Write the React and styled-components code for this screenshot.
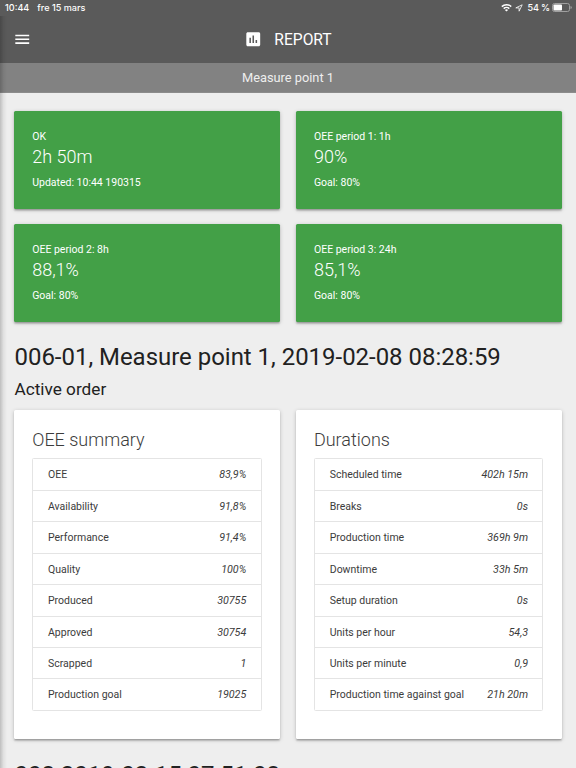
import styled, { createGlobalStyle } from 'styled-components'

const GlobalStyle = createGlobalStyle`
  * {
    box-sizing: border-box;
  }

  body {
    margin: 0;
    background-color: #eeeeee;
    font-family: Roboto, "Liberation Sans", sans-serif;
    color: #212121;
  }
`

const Screen = styled.div`
  position: relative;
  height: 768px;
  overflow: hidden;
`

// shadow that the closed side menu throws on the page
const MenuShadow = styled.div`
  position: absolute;
  top: 16px;
  left: 0;
  bottom: 0;
  width: 7px;
  background: linear-gradient(to right, rgba(0, 0, 0, 0.2), rgba(0, 0, 0, 0.06) 50%, transparent);
`

const Header = styled.header`
  height: 63px;
  background-color: #5a5a5a;
  color: #fff;
`

const StatusBar = styled.div`
  display: flex;
  align-items: center;
  height: 15px;
  padding: 0 4px 0 5px;
  font-family: Inter, "Liberation Sans", sans-serif;
  font-size: 9.1px;
  font-weight: 500;
  line-height: 15px;
`

const StatusDate = styled.span`
  margin-left: 8px;
  flex: 1;
`

const Battery = styled.span`
  margin-left: 4px;
  word-spacing: -0.5px;
`

const StatusIcon = styled.svg`
  display: block;
  flex-shrink: 0;
  margin-left: ${(props) => props.$gap || 0}px;
`

const NavBar = styled.nav`
  display: grid;
  grid-template-columns: 1fr auto 1fr;
  align-items: center;
  height: 49px;
  padding: 0 13px;
`

const Brand = styled.h1`
  display: flex;
  align-items: center;
  gap: 11.5px;
  margin: 0;
  font-size: 15.6px;
  font-weight: 400;
  line-height: 20px;
`

const SubBar = styled.div`
  height: 30px;
  border-bottom: 1px solid #8c8c8c;
  background-color: #828282;
  color: #eeeeee;
  font-size: 12.8px;
  line-height: 29px;
  text-align: center;
`

const Content = styled.main`
  padding: 18px 14.5px 0 14px;
`

const CardGrid = styled.div`
  display: grid;
  grid-template-columns: 1fr 1fr;
  gap: 15.6px 16px;
`

const Card = styled.div`
  padding: 18px 18.2px;
  border-radius: 1.5px;
  background-color: #fff;
  box-shadow: 0 1.5px 1.5px 0 rgba(0, 0, 0, 0.14), 0 2px 1px -1px rgba(0, 0, 0, 0.12), 0 1px 4px 0 rgba(0, 0, 0, 0.2);
`

const StatCard = styled(Card)`
  height: 97.5px;
  background-color: #43a047;
  color: #fff;
  font-size: 10.5px;
  line-height: 16px;
`

const StatValue = styled.div`
  margin-bottom: 6px;
  font-size: 18px;
  font-weight: 300;
  line-height: 24px;
`

const Heading = styled.h2`
  margin: ${(props) => props.$top}px 0 0 0.5px;
  font-size: 23.95px;
  font-weight: 400;
  line-height: 28px;
  white-space: nowrap;
`

const SubHeading = styled.h3`
  margin: 7px 0 10px 0.5px;
  font-size: 17.2px;
  font-weight: 400;
  line-height: 22px;
`

const TableCard = styled(Card)`
  height: 329px;
  color: #3c3c3c;
`

const CardTitle = styled.div`
  margin-bottom: 6px;
  font-size: 18px;
  font-weight: 300;
  line-height: 24px;
`

const List = styled.ul`
  margin: 0;
  padding: 0;
  border: 1px solid #e4e4e4;
  border-radius: 1.5px;
  list-style: none;
`

const Row = styled.li`
  display: flex;
  justify-content: space-between;
  height: 31.4px;
  padding: 0 14.3px 0 14.8px;
  font-size: 10.5px;
  line-height: 31px;

  & + & {
    border-top: 1px solid #e4e4e4;
  }
`

const RowValue = styled.em`
  font-size: 10.7px;
`

const stats = [
  { label: 'OK', value: '2h 50m', note: 'Updated: 10:44 190315' },
  { label: 'OEE period 1: 1h', value: '90%', note: 'Goal: 80%' },
  { label: 'OEE period 2: 8h', value: '88,1%', note: 'Goal: 80%' },
  { label: 'OEE period 3: 24h', value: '85,1%', note: 'Goal: 80%' },
]

const tables = [
  {
    title: 'OEE summary',
    rows: [
      ['OEE', '83,9%'],
      ['Availability', '91,8%'],
      ['Performance', '91,4%'],
      ['Quality', '100%'],
      ['Produced', '30755'],
      ['Approved', '30754'],
      ['Scrapped', '1'],
      ['Production goal', '19025'],
    ],
  },
  {
    title: 'Durations',
    rows: [
      ['Scheduled time', '402h 15m'],
      ['Breaks', '0s'],
      ['Production time', '369h 9m'],
      ['Downtime', '33h 5m'],
      ['Setup duration', '0s'],
      ['Units per hour', '54,3'],
      ['Units per minute', '0,9'],
      ['Production time against goal', '21h 20m'],
    ],
  },
]

const WifiIcon = () => (
  <StatusIcon width="11" height="9" viewBox="0 0 11 9" fill="none" stroke="#fff" strokeWidth="1.5">
    <path d="M0.8 3.6a6.7 6.7 0 0 1 9.4 0" />
    <path d="M2.7 5.6a4 4 0 0 1 5.6 0" />
    <path d="M5.5 8.6L3.9 7a2.3 2.3 0 0 1 3.2 0z" fill="#fff" stroke="none" />
  </StatusIcon>
)

const LocationIcon = () => (
  <StatusIcon $gap={3} width="8" height="8" viewBox="0 0 8 8" fill="none" stroke="#fff" strokeWidth="0.8" strokeLinejoin="round">
    <path d="M7.2 0.8L0.8 3.9h3.3v3.3z" />
  </StatusIcon>
)

const BatteryIcon = () => (
  <StatusIcon $gap={2} width="20" height="9" viewBox="0 0 20 9">
    <rect x="0.5" y="0.5" width="17" height="8" rx="2" fill="none" stroke="#a0a0a0" />
    <rect x="1.5" y="1.5" width="8.5" height="6" rx="0.8" fill="#fff" />
    <path d="M18.5 3v3q1.3-.4 1.3-1.5T18.5 3z" fill="#a0a0a0" />
  </StatusIcon>
)

const MenuIcon = () => (
  <svg width="18.5" height="18.5" viewBox="0 0 24 24" fill="#fff">
    <path d="M3 18h18v-2H3v2zm0-5h18v-2H3v2zm0-7v2h18V6H3z" />
  </svg>
)

const ReportIcon = () => (
  <svg width="18.5" height="18.5" viewBox="0 0 24 24" fill="#fff">
    <path d="M19 3H5c-1.1 0-2 .9-2 2v14c0 1.1.9 2 2 2h14c1.1 0 2-.9 2-2V5c0-1.1-.9-2-2-2zM9 17H7v-7h2v7zm4 0h-2V7h2v10zm4 0h-2v-4h2v4z" />
  </svg>
)

const App = () => {
  return (
    <Screen>
      <GlobalStyle />
      <Header>
        <StatusBar>
          <span>10:44</span>
          <StatusDate>fre 15 mars</StatusDate>
          <WifiIcon />
          <LocationIcon />
          <Battery>54 %</Battery>
          <BatteryIcon />
        </StatusBar>
        <NavBar>
          <MenuIcon />
          <Brand><ReportIcon />REPORT</Brand>
        </NavBar>
      </Header>
      <SubBar>Measure point 1</SubBar>

      <Content>
        <CardGrid>
          {stats.map((stat) => (
            <StatCard key={stat.label}>
              <div>{stat.label}</div>
              <StatValue>{stat.value}</StatValue>
              <div>{stat.note}</div>
            </StatCard>
          ))}
        </CardGrid>

        <Heading $top={21}>006-01, Measure point 1, 2019-02-08 08:28:59</Heading>
        <SubHeading>Active order</SubHeading>

        <CardGrid>
          {tables.map((table) => (
            <TableCard key={table.title}>
              <CardTitle>{table.title}</CardTitle>
              <List>
                {table.rows.map(([name, value]) => (
                  <Row key={name}>
                    <span>{name}</span>
                    <RowValue>{value}</RowValue>
                  </Row>
                ))}
              </List>
            </TableCard>
          ))}
        </CardGrid>

        <Heading $top={22}>008 2019-02-15 07:51:08</Heading>
      </Content>
      <MenuShadow />
    </Screen>
  )
}

export default App
